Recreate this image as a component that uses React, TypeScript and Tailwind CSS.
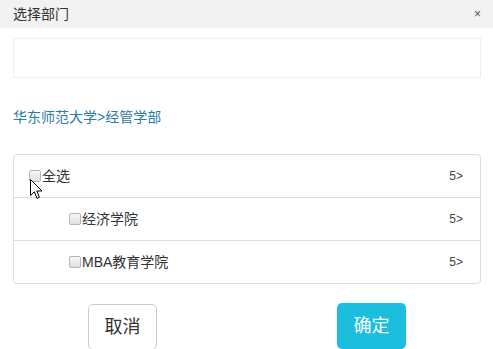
const FONT = "font-['Liberation_Sans','Noto_Sans_CJK_SC',sans-serif]";

const ROWS = [
  { label: "全选", count: 5, indent: false },
  { label: "经济学院", count: 5, indent: true },
  { label: "MBA教育学院", count: 5, indent: true },
];

function Box() {
  return (
    <span className="inline-block w-[12px] h-[12px] mr-[1px] rounded-[2px] border border-[#b5b5b5] bg-gradient-to-b from-[#f7f7f7] to-[#e0e0e0]" />
  );
}

function Cursor() {
  return (
    <svg
      className="absolute left-[30px] top-[179px]"
      width="13"
      height="21"
      viewBox="0 0 13 21"
    >
      <path
        d="M0.5 0.5 L0.5 16.5 L4.3 12.8 L7 19.3 L9.4 18.3 L6.8 12 L12 12 Z"
        fill="#fff"
        stroke="#000"
        strokeWidth="1"
        strokeLinejoin="round"
      />
    </svg>
  );
}

export default function App() {
  return (
    <div className={`relative w-[493px] h-[349px] overflow-hidden bg-white ${FONT}`}>
      <header className="h-[28px] bg-[#f2f2f2] flex items-center justify-between pl-[13px] pr-[12px]">
        <span className="text-[14px] text-[#333]">选择部门</span>
        <span className="text-[12px] text-[#555] leading-none">×</span>
      </header>

      <div className="px-[13px] pr-[12px]">
        <div className="mt-[10px] h-[40px] border border-[#eeeeee]" />

        <div className="mt-[31px] text-[14px] leading-[16px] text-[#2a7ba6]">
          华东师范大学&gt;经管学部
        </div>

        <ul className="mt-[29px] border border-[#dddddd] rounded-[4px]">
          {ROWS.map((row, i) => (
            <li
              key={row.label}
              className={`flex items-center justify-between pr-[17px] text-[14px] text-[#333] ${
                i > 0 ? "h-[43px] border-t border-[#dddddd]" : "h-[42px]"
              } ${row.indent ? "pl-[55px]" : "pl-[15px]"}`}
            >
              <span className="flex items-center">
                <Box />
                {row.label}
              </span>
              <span className="text-[12px] text-[#444]">{row.count}&gt;</span>
            </li>
          ))}
        </ul>

        <div className="mt-[19px] flex items-start">
          <button className="mt-[1px] ml-[75px] w-[69px] h-[46px] rounded-[5px] border border-[#cccccc] bg-white text-[18px] text-[#333]">
            取消
          </button>
          <button className="ml-[180px] w-[69px] h-[46px] rounded-[5px] bg-[#1bbfdd] text-[18px] text-white">
            确定
          </button>
        </div>
      </div>

      <Cursor />
    </div>
  );
}
